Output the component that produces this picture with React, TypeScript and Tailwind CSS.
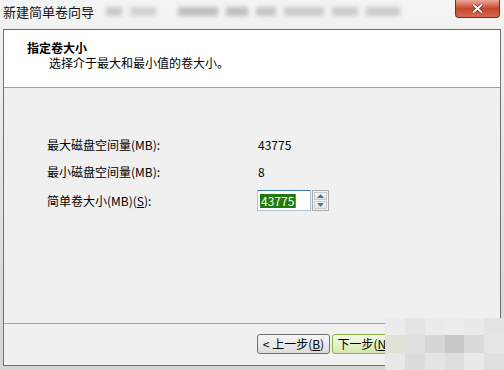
const font = { fontFamily: '"Noto Sans CJK SC", "Noto Sans", sans-serif' };

function Spinner() {
  return (
    <div className="ml-[1px] flex h-[21px] w-[17px] flex-col gap-[1px] border border-[#a8a8a8] bg-[#f4f4f4] p-[1px]">
      <div className="flex flex-1 items-center justify-center border border-[#c9c9c9] bg-gradient-to-b from-[#fafafa] to-[#e3e3e3]">
        <svg width="7" height="4" viewBox="0 0 7 4">
          <path d="M0 4 L3.5 0 L7 4 Z" fill="#4d6fae" />
        </svg>
      </div>
      <div className="flex flex-1 items-center justify-center border border-[#c9c9c9] bg-gradient-to-b from-[#fafafa] to-[#e3e3e3]">
        <svg width="7" height="4" viewBox="0 0 7 4">
          <path d="M0 0 L7 0 L3.5 4 Z" fill="#4d6fae" />
        </svg>
      </div>
    </div>
  );
}

export default function App() {
  return (
    <div
      className="relative flex h-[370px] w-[504px] flex-col overflow-hidden bg-gradient-to-b from-[#f4f4f4] via-[#e2e4e2] to-[#d3d6d3] text-[12px] text-black"
      style={font}>
      {/* blurred glass title bar */}
      <div className="relative flex h-[29px] items-start pl-[3px] pt-[4px]">
        <span className="text-[13px] leading-[16px] text-[#111]">新建简单卷向导</span>
        <div className="ml-[12px] mt-[3px] flex gap-[8px] opacity-40">
          <div className="h-[9px] w-[16px] bg-[#8a8a8a] blur-[2px]" />
          <div className="h-[9px] w-[26px] bg-[#a0a0a0] blur-[2px]" />
          <div className="ml-[14px] h-[9px] w-[40px] bg-[#707070] blur-[2px]" />
          <div className="h-[9px] w-[22px] bg-[#707070] blur-[2px]" />
          <div className="h-[9px] w-[20px] bg-[#808080] blur-[2px]" />
          <div className="h-[9px] w-[40px] bg-[#909090] blur-[2px]" />
          <div className="h-[9px] w-[26px] bg-[#909090] blur-[2px]" />
          <div className="h-[9px] w-[34px] bg-[#909090] blur-[2px]" />
        </div>
        <div className="absolute right-[4px] top-0 flex h-[18px] w-[45px] items-center justify-center rounded-b-[4px] border border-t-0 border-[#7a2a1e] bg-gradient-to-b from-[#e8a89a] via-[#c8452e] to-[#d26a50]">
          <svg width="11" height="9" viewBox="0 0 11 9">
            <path d="M1 0.5 L10 8.5 M10 0.5 L1 8.5" stroke="#5a1a10" strokeWidth="3.2" />
            <path d="M1 0.5 L10 8.5 M10 0.5 L1 8.5" stroke="#ffffff" strokeWidth="2" />
          </svg>
        </div>
      </div>

      {/* dialog client area */}
      <div className="mx-[3px] mb-[4px] flex flex-1 flex-col border border-[#707070] bg-[#f0f0f0]">
        <div className="h-[58px] border-b border-[#a0a0a0] bg-white pl-[23px] pt-[10px]">
          <div className="text-[12px] font-bold leading-[15px]">指定卷大小</div>
          <div className="pl-[22px] leading-[15px]">选择介于最大和最小值的卷大小。</div>
        </div>

        <div className="flex-1 border-b border-[#a0a0a0] pl-[43px] pt-[50px]">
          <div className="flex h-[14px] items-center">
            <span className="w-[211px]">最大磁盘空间量(MB):</span>
            <span>43775</span>
          </div>
          <div className="mt-[13px] flex h-[14px] items-center">
            <span className="w-[211px]">最小磁盘空间量(MB):</span>
            <span>8</span>
          </div>
          <div className="mt-[11px] flex items-center">
            <span className="w-[210px]">简单卷大小(MB)(<span className="underline">S</span>):</span>
            <div className="flex h-[21px] w-[54px] items-center border border-[#abc4d9] border-t-[#3d7bad] bg-white pl-[2px]">
              <span className="bg-[#1f7a0c] px-[1px] leading-[14px] text-white">43775</span>
              <span className="h-[14px] w-[1px] bg-[#d040d0]" />
            </div>
            <Spinner />
          </div>
        </div>

        <div className="flex h-[41px] items-center pb-[1px] pl-[253px]">
          <button className="flex h-[20px] w-[73px] items-center justify-center rounded-[3px] border border-[#707070] bg-gradient-to-b from-[#f6f6f6] to-[#dcdcdc]">
            &lt; 上一步(<span className="underline">B</span>)
          </button>
          <button className="ml-[2px] flex h-[20px] w-[73px] items-center justify-center rounded-[3px] border border-[#8bb54a] bg-gradient-to-b from-[#f3f9e6] to-[#d5e8b0]">
            下一步(<span className="underline">N</span>) &gt;
          </button>
        </div>
      </div>

      {/* pixelated watermark over bottom right */}
      <div className="absolute left-[385px] top-[318px] grid h-[52px] w-[119px] grid-cols-6 grid-rows-3">
        <div className="bg-[#ececec]" />
        <div className="bg-[#e4e4e4]" />
        <div className="bg-[#ebebeb]" />
        <div className="bg-[#ededed]" />
        <div className="bg-[#e9e9e9]" />
        <div className="bg-[#e3e3e3]" />
        <div className="bg-[#dfe3d6]" />
        <div className="bg-[#e0e0e0]" />
        <div className="bg-[#d6d6d6]" />
        <div className="bg-[#c8c8c8]" />
        <div className="bg-[#dadada]" />
        <div className="bg-[#e6e6e6]" />
        <div className="bg-[#e8e8e8]" />
        <div className="bg-[#dcdcdc]" />
        <div className="bg-[#e4e4e4]" />
        <div className="bg-[#dedede]" />
        <div className="bg-[#e9e9e9]" />
        <div className="bg-[#e1e1e1]" />
      </div>
    </div>
  );
}
